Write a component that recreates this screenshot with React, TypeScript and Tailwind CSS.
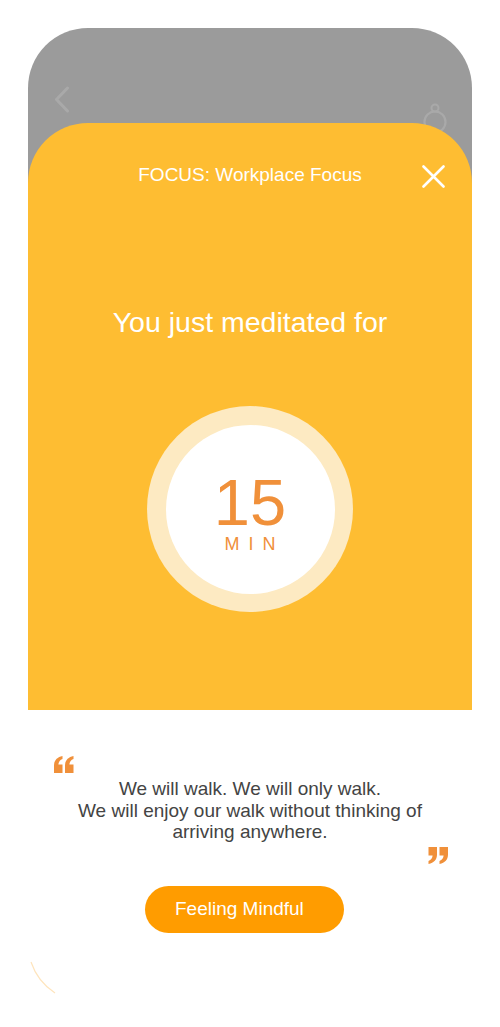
import React from "react";

function QuoteMark({ flip = false }: { flip?: boolean }) {
  return (
    <svg width="20" height="17" viewBox="0 0 20 17" style={flip ? { transform: "rotate(180deg)" } : undefined}>
      <path d="M0 17 L0 9.5 C0 4.5 3 1.2 8.5 0 L8.5 3 C5.8 4 4.6 6 4.4 8.5 L8.5 8.5 L8.5 17 Z" fill="#F0903A" />
      <path d="M11 17 L11 9.5 C11 4.5 14 1.2 19.5 0 L19.5 3 C16.8 4 15.6 6 15.4 8.5 L19.5 8.5 L19.5 17 Z" fill="#F0903A" />
    </svg>
  );
}

export default function App() {
  return (
    <div
      className="w-[500px] h-[1027px] bg-white pt-[28px] px-[28px]"
      style={{ fontFamily: '"Liberation Sans", Arial, sans-serif' }}
    >
      <div className="relative flex flex-col">
        {/* grey header */}
        <div className="relative h-[155px] bg-[#9b9b9b] rounded-t-[60px] flex justify-between px-[24px]">
          <svg className="mt-[58px] ml-[2px]" width="16" height="27" viewBox="0 0 16 27">
            <path d="M13.5 2 L2.5 13.5 L13.5 25" fill="none" stroke="#a9a9a9" strokeWidth="3" strokeLinecap="round" strokeLinejoin="round" />
          </svg>
          <svg className="mt-[75px]" width="26" height="30" viewBox="0 0 26 30">
            <circle cx="13" cy="5" r="3.5" fill="none" stroke="#a9a9a9" strokeWidth="2" />
            <circle cx="13" cy="19" r="10.5" fill="none" stroke="#a9a9a9" strokeWidth="2.2" />
          </svg>
        </div>

        {/* yellow panel */}
        <div className="relative z-10 -mt-[60px] bg-[#FEBD32] rounded-t-[60px] h-[587px] flex flex-col items-center">
          <div className="mt-[41px] text-[19px] leading-[22px] text-white">FOCUS: Workplace Focus</div>
          <svg className="absolute top-[42px] right-[27px]" width="23" height="23" viewBox="0 0 23 23">
            <path d="M1.5 1.5 L21.5 21.5 M21.5 1.5 L1.5 21.5" stroke="white" strokeWidth="2.6" strokeLinecap="round" />
          </svg>
          <div className="mt-[120px] text-[28.5px] leading-[32px] text-white">You just meditated for</div>
          <div className="mt-[68px] w-[206px] h-[206px] rounded-full bg-[#FDEAC2] flex items-center justify-center">
            <div className="w-[169px] h-[169px] rounded-full bg-white flex flex-col items-center">
              <div className="mt-[45px] text-[65px] leading-[66px] text-[#F0903A]">15</div>
              <div className="mt-[1px] pl-[9px] text-[18px] leading-[14px] tracking-[0.5em] text-[#F0903A]">MIN</div>
            </div>
          </div>
        </div>

        {/* white quote area */}
        <div className="relative bg-white h-[290px] flex flex-col">
          <div className="mt-[46px] pl-[26px]">
            <QuoteMark />
          </div>
          <div className="mt-[5px] text-center text-[19px] leading-[21.5px] text-[#444444]">
            We will walk. We will only walk.
            <br />
            We will enjoy our walk without thinking of
            <br />
            arriving anywhere.
          </div>
          <div className="mt-[4px] flex justify-end pr-[24px]">
            <QuoteMark flip />
          </div>
          <div className="mt-[22px] ml-[117px] w-[199px] h-[47px] rounded-full bg-[#FF9C00] flex items-center pl-[30px] text-[19px] text-white">
            Feeling Mindful
          </div>
          <svg className="absolute left-0 top-[240px]" width="60" height="60" viewBox="0 0 60 60">
            <path d="M3 12 A 60 60 0 0 0 27 43" fill="none" stroke="#FDD9A0" strokeOpacity="0.7" strokeWidth="1.2" />
          </svg>
        </div>
      </div>
    </div>
  );
}
